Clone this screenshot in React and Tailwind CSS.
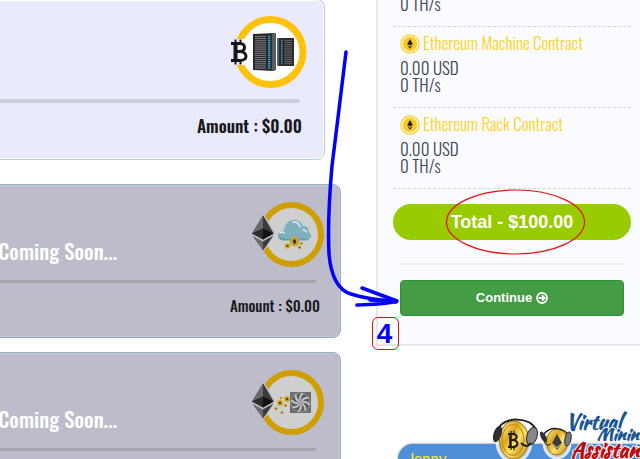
import React from "react";

const narrow =
  "font-['Oswald','Roboto_Condensed','Liberation_Sans_Narrow','Arial_Narrow',sans-serif]";

function EthDiamond() {
  return (
    <g>
      <path d="M11 0 21.500 18 11 24 0 18Z" fill="#333" />
      <path d="M11 0V13L0 18Z" fill="#6b6b6b" />
      <path d="M11 0V13L21.500 18Z" fill="#3c3b3b" />
      <path d="M11 13V24L0 18Z" fill="#2d2d2d" />
      <path d="M11 13V24L21.500 18Z" fill="#101010" />
      <path d="M0 20 11 26V35Z" fill="#6b6b6b" />
      <path d="M21.500 20 11 26V35Z" fill="#3c3b3b" />
    </g>
  );
}

function RackIcon() {
  const rows = Array.from({ length: 16 }, (_, i) => i);
  return (
    <svg className="block h-[74px] w-[78px]" viewBox="230 15 78 74" aria-hidden="true">
      <circle cx="270.500" cy="52" r="32.500" fill="#fff" stroke="#ffc20a" strokeWidth="7" />
      <path d="M230 39H247V65H230Z" fill="#eaeafd" />
      <path d="M240 39H249V65H240Z" fill="#fff" />
      <g fill="none" stroke="#17171a">
        <path
          d="M231 43.500H240C246 43.500 246 51 240 51.500H235M240 51.500C248 52 248 60.500 240 60.500H231"
          strokeWidth="3"
        />
        <path d="M235.500 43V61" strokeWidth="4" />
        <path d="M235.500 39.500V43M240.500 39.500V43M235.500 61V64.500M240.500 61V64.500" strokeWidth="2" />
      </g>
      <path d="M253 34 274 33 276 35V69L274 71 253 70Z" fill="#29292c" />
      <path d="M272 34 276 33V70L272 71Z" fill="#5b5c61" />
      <path d="M277 38H294V66H277Z" fill="#2c2c30" />
      <path d="M277 38H279V66H277Z" fill="#606268" />
      {rows.map((i) => (
        <path key={i} d={`M255 ${36.5 + i * 2.1}H266`} stroke="#87888b" strokeWidth="0.900" />
      ))}
      {rows.map((i) => (
        <path key={i} d={`M268 ${36.5 + i * 2.1}H270.500`} stroke="#1fa5cb" strokeWidth="1.400" />
      ))}
      {rows.slice(0, 12).map((i) => (
        <path key={i} d={`M284.500 ${40.5 + i * 2.1}H292`} stroke="#6c6d70" strokeWidth="0.900" />
      ))}
      {rows.slice(0, 12).map((i) => (
        <path key={i} d={`M281 ${40.5 + i * 2.1}H282.500`} stroke="#1d9dc0" strokeWidth="1.400" />
      ))}
    </svg>
  );
}

function EthRing({ children }) {
  return (
    <svg className="block h-[68px] w-[74px]" viewBox="251 200 74 68" aria-hidden="true">
      <circle cx="291.500" cy="233.500" r="29.500" fill="#cfcfcf" stroke="#cf9f02" strokeWidth="6" />
      <path d="M262 209 275 232 262 254 250 232Z" fill="#bdbccb" />
      <g transform="translate(252 214.500)">
        <EthDiamond />
      </g>
      {children}
    </svg>
  );
}

function Coin({ x, y, r }) {
  return (
    <g>
      <circle cx={x} cy={y} r={r} fill="#d5a51f" />
      <circle cx={x} cy={y} r={r * 0.4} fill="#5a4712" />
    </g>
  );
}

function CloudIcon() {
  return (
    <EthRing>
      <path
        d="M283 239.500C276 239 276 230 284 229.500C285 217 299 215 303 225C308 225 309 228 308.500 231C313 233 311 239.500 306 239.500Z"
        fill="#7eb0bd"
      />
      <path d="M293 221C297 220 299 223 300 226M280 232Q282 230 284 232M303 229Q306 229 306 231" fill="none" stroke="#e2edf0" strokeWidth="1.500" strokeLinecap="round" />
      <path d="M279 236Q281 238.500 285 238.500H307" fill="none" stroke="#619aaa" strokeWidth="1.500" />
      <circle cx="294.500" cy="240.500" r="5" fill="#c9a23a" />
      <path d="M294.500 237.500 296.300 240.500 294.500 243.500 292.700 240.500Z" fill="#332c1a" />
      <Coin x={287.5} y={245} r={2.8} />
      <Coin x={299.5} y={246.5} r={1.8} />
      <Coin x={301.5} y={242.5} r={1.5} />
    </EthRing>
  );
}

function FanIcon() {
  const blades = [0, 45, 90, 135, 180, 225, 270, 315];
  return (
    <EthRing>
      <rect x="290" y="223" width="21" height="21" fill="#6d6e71" />
      <circle cx="300.500" cy="233.500" r="9.500" fill="#5b5c5f" stroke="#9b9c9e" strokeWidth="0.800" />
      {blades.map((a) => (
        <path
          key={a}
          d="M300.500 231.500Q299 227 303 224.500"
          transform={`rotate(${a} 300.5 233.5)`}
          fill="none"
          stroke="#c0c1c2"
          strokeWidth="2"
        />
      ))}
      <circle cx="300.500" cy="233.500" r="2" fill="#a5a6a8" />
      <Coin x={280} y={234} r={3} />
      <Coin x={287} y={230} r={3} />
      <Coin x={276} y={239.5} r={1.6} />
      <Coin x={285.5} y={236.5} r={1.6} />
      <Coin x={281} y={229} r={1.3} />
      <Coin x={282} y={243.5} r={1.6} />
    </EthRing>
  );
}

function ComingSoonCard({ children }) {
  return (
    <article className="-ml-1 h-[154px] shrink-0 rounded-r-lg border border-[#8fb0c4] bg-[#bdbccb] shadow-[inset_0_0_0_1px_#c9c8ce]">
      <div className="flex h-[94px] items-end justify-between pl-px pr-[15px] pt-4">
        <h2 className={`${narrow} mb-3 text-[21px] font-medium leading-[32px] text-white`}>
          Coming Soon...
        </h2>
        <div className="self-start">{children}</div>
      </div>
      <div className="mr-6 mt-px h-[3px] rounded-r bg-[#a3a4ae]" />
      <p className={`${narrow} mr-5 mt-[11px] text-right text-[15px] font-medium leading-[22px] text-[#1a1a1d]`}>
        Amount : $0.00
      </p>
    </article>
  );
}

function Contract({ name }) {
  return (
    <li className="h-[81px] border-t border-dashed border-[#d5d6d8] px-[7px] pt-[7px]">
      <h3 className="flex h-[17px] items-center gap-[3px] font-[350] text-[#ffd21a]">
        <svg className="mt-0.5 h-5 w-5 shrink-0" viewBox="0 0 20 20" aria-hidden="true">
          <circle cx="10" cy="10" r="9.200" fill="#fff3b8" stroke="#f8d13c" strokeWidth="1.200" />
          <circle cx="10" cy="10" r="7.200" fill="#fbca26" />
          <path d="M10 5 12.800 10 10 11.500 7.200 10Z" fill="#222" />
          <path d="M7.200 11 10 12.700 12.800 11 10 15Z" fill="#333" />
        </svg>
        {name}
      </h3>
      <p className="mt-2">0.00 USD</p>
      <p>0 TH/s</p>
    </li>
  );
}

function AssistantLogo() {
  return (
    <svg
      className="absolute bottom-0 right-0 h-[50px] w-[150px]"
      viewBox="490 409 150 50"
      role="img"
      aria-label="Virtual Mining Assistant"
    >
      <defs>
        <linearGradient id="gold" x1="0" y1="0" x2="1" y2="1">
          <stop offset="0" stopColor="#fff0a0" />
          <stop offset="0.350" stopColor="#dda61c" />
          <stop offset="0.600" stopColor="#ffe36b" />
          <stop offset="1" stopColor="#b87b06" />
        </linearGradient>
      </defs>
      <g stroke="#fff" strokeOpacity="0.800" strokeWidth="5">
        <ellipse cx="514" cy="441" rx="16" ry="20" />
        <ellipse cx="557" cy="443" rx="12" ry="14" />
      </g>
      <ellipse cx="514" cy="440" rx="14.500" ry="19" fill="url(#gold)" stroke="#a87508" />
      <ellipse cx="513" cy="440" rx="11" ry="15.500" fill="url(#gold)" stroke="#b9850f" />
      <g fill="none" stroke="#221c0c">
        <path d="M508 434H513C518 434 518 440 512 440H510M512 440C519 440 519 447 513 447H508" strokeWidth="2.200" />
        <path d="M510.500 434V447" strokeWidth="2.500" />
        <path d="M511 431V434M514 431V434M511 447V450M514 447V450" strokeWidth="1.300" />
      </g>
      <path d="M499 428C504 417 530 416 536 430" fill="none" stroke="#1d1e22" strokeWidth="2" />
      <ellipse cx="497.500" cy="434" rx="4" ry="8.500" transform="rotate(18 497.500 434)" fill="#2d2f34" />
      <ellipse cx="532" cy="436" rx="5" ry="9" transform="rotate(18 532 436)" fill="#85888e" stroke="#292a2e" />
      <path d="M531 443Q527 449 521 443" fill="none" stroke="#1d1e22" strokeWidth="2" />
      <ellipse cx="557" cy="442" rx="10.500" ry="13" fill="url(#gold)" stroke="#a87508" />
      <path d="M557 434 562 443 557 447 552 443Z" fill="#3a3a3d" />
      <path d="M552 444 557 448 562 444 557 450Z" fill="#606064" />
      <path d="M544 434C550 426 564 427 569 436" fill="none" stroke="#1d1e22" strokeWidth="1.500" />
      <ellipse cx="543.500" cy="437" rx="2.500" ry="6" transform="rotate(-28 543.500 437)" fill="#2d2f34" />
      <ellipse cx="568" cy="439" rx="3" ry="7" transform="rotate(12 568 439)" fill="#777a80" stroke="#292a2e" />
      <path d="M544 442Q547 447 551 444" fill="none" stroke="#222" />
      <g
        className="font-['Kaushan_Script','Lobster','Pacifico','Liberation_Serif',cursive] font-bold"
        stroke="#fff"
        strokeWidth="2"
        strokeLinejoin="round"
        paintOrder="stroke"
      >
        <text x="566" y="429" fontSize="20" fill="#1b5796">Virtual</text>
        <text x="597" y="440" fontSize="17" fill="#1b5796">Mining</text>
        <text x="571" y="457" fontSize="21" fill="#b90e12">Assistant</text>
      </g>
    </svg>
  );
}

function Annotations() {
  return (
    <svg
      className="pointer-events-none absolute left-0 top-0 h-[459px] w-[640px]"
      viewBox="0 0 640 459"
      fill="none"
      aria-hidden="true"
    >
      <path
        d="M346 52C341 94 337 125 332 166C329 200 328 234 329 254C331 277 338 290 351 294C363 298 378 300 396 302"
        stroke="#0000fb"
        strokeWidth="3.500"
        strokeLinecap="round"
      />
      <path
        d="M362 288C373 292 386 297 397 301C384 305 370 304 357 305M370 300 397 301"
        stroke="#0000fb"
        strokeWidth="3.500"
        strokeLinecap="round"
        strokeLinejoin="round"
      />
      <ellipse cx="515.500" cy="222" rx="69" ry="32" stroke="#f00c0c" strokeWidth="1.200" />
    </svg>
  );
}

export default function App() {
  return (
    <div className="relative flex h-screen overflow-hidden bg-white font-['Liberation_Sans',Arial,sans-serif]">
      <main className="flex w-[341px] shrink-0 flex-col">
        <article className="-ml-1 -mt-px mb-6 mr-4 h-[161px] shrink-0 rounded-r-lg border border-[#b3cde0] bg-[#eaeafd] shadow-[inset_0_0_0_1px_#fff]">
          <div className="flex justify-end pr-4 pt-[15px]">
            <RackIcon />
          </div>
          <div className="mr-6 mt-[10px] h-1 rounded-r bg-[#cccdd9]" />
          <p className={`${narrow} mr-[22px] mt-[11px] text-right text-[17px] font-semibold leading-[24px] text-[#1a1a1d]`}>
            Amount : $0.00
          </p>
        </article>
        <div className="flex flex-col gap-[14px]">
          <ComingSoonCard>
            <CloudIcon />
          </ComingSoonCard>
          <ComingSoonCard>
            <FanIcon />
          </ComingSoonCard>
        </div>
      </main>

      <aside className="ml-[35px] flex min-w-0 flex-1 flex-col">
        <section className="-mr-2 border-b-2 border-l-2 border-[#e7e8ea] bg-[#fafbfe] pb-[28px] pl-[15px] pr-[17px]">
          <ul className={`${narrow} text-[17px] font-light leading-[17px] text-[#3c4656]`}>
            <li className="-mt-[5px] px-[7px] pb-[14px]">0 TH/s</li>
            <Contract name="Ethereum Machine Contract" />
            <Contract name="Ethereum Rack Contract" />
          </ul>
          <div className="border-t border-dashed border-[#d5d6d8] pt-[15px]">
            <p className="rounded-full bg-[#99cc00] text-center text-[18px] font-bold leading-[36px] text-white">
              Total - $100.00
            </p>
          </div>
          <div className="mx-[7px] mt-[23px] border-t-2 border-[#f0f1f4] pt-[15px]">
            <button
              type="button"
              className="flex h-9 w-full items-center justify-center gap-1 rounded-sm border border-[#2f8f36] bg-[#449d44] text-[13px] font-bold text-white"
            >
              Continue
              <svg className="h-3 w-3" viewBox="0 0 12 12" fill="none" stroke="currentColor" strokeWidth="1.800" aria-hidden="true">
                <circle cx="6" cy="6" r="5" />
                <path d="M2.500 6H8.500M6 3.300 8.700 6 6 8.700" />
              </svg>
            </button>
          </div>
        </section>
        <section className="relative ml-[22px] mt-auto h-[15px] rounded-tl-2xl bg-[#4f8fda] pl-2.5 shadow-[0_0_3px_#888]">
          <p className="h-full overflow-hidden pt-1 font-['Lato',sans-serif] text-[15px] font-medium leading-[20px] text-[#f4e526]">
            Jenny
          </p>
          <AssistantLogo />
        </section>
      </aside>

      <Annotations />
      <span className="absolute left-[372px] top-[317px] flex h-[33px] w-[27px] items-center justify-center rounded-md border border-[#f00c0c] pr-0.5 text-[28px] font-bold text-[#0000fb]">
        4
      </span>
    </div>
  );
}
